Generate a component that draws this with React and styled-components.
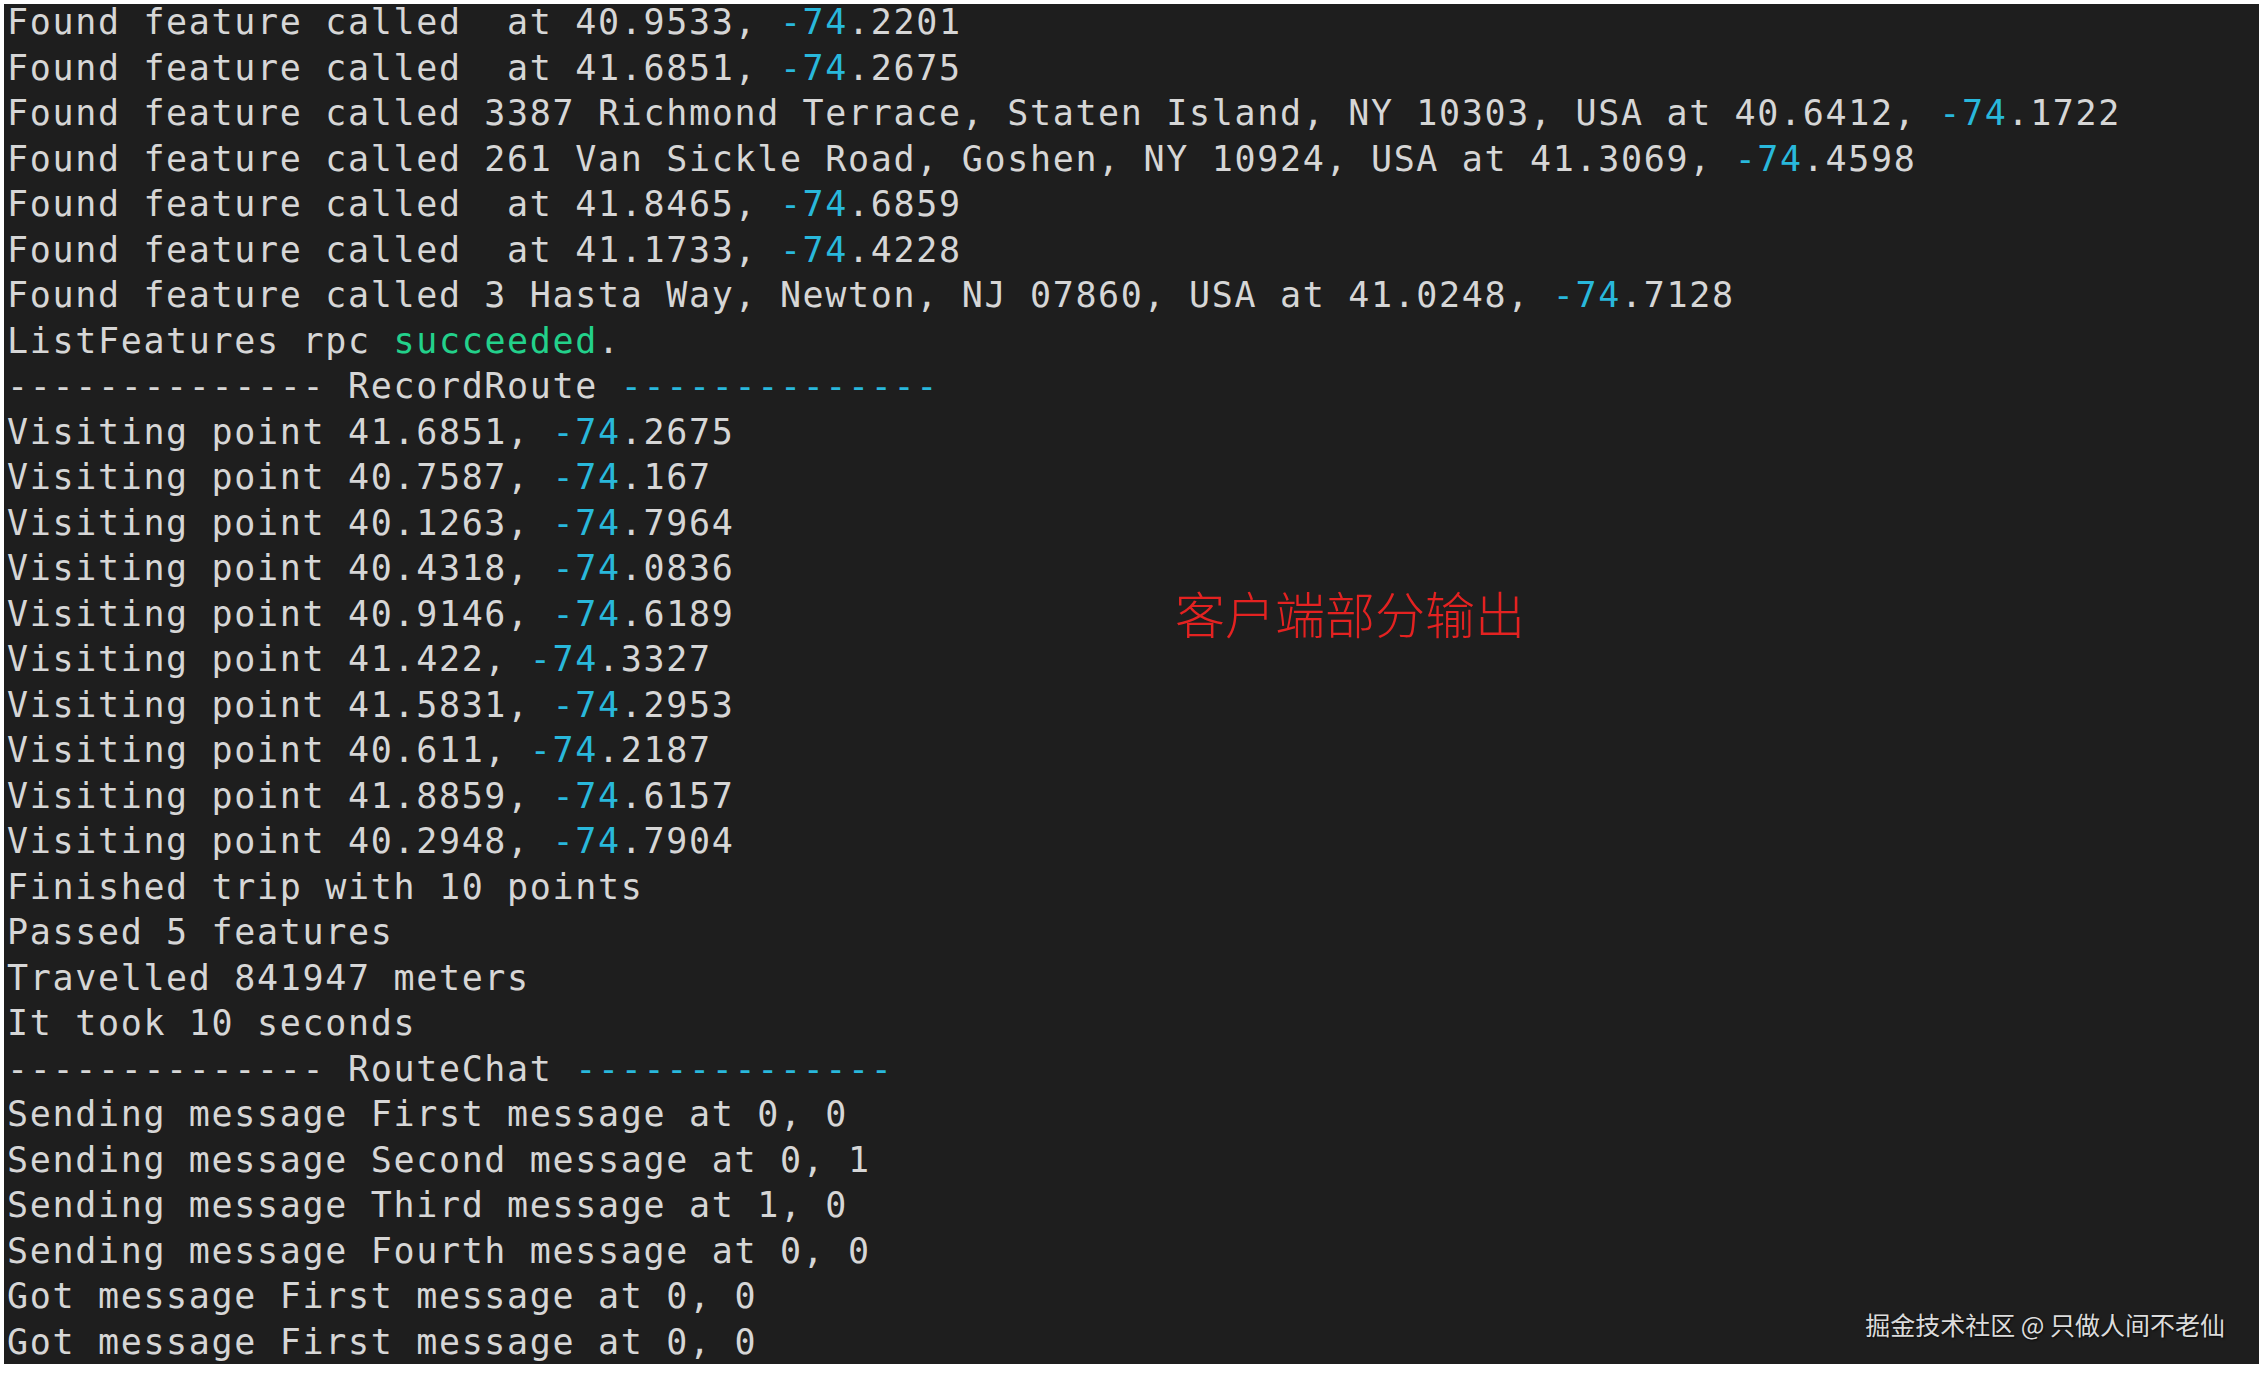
import React from "react";
import styled, { createGlobalStyle } from "styled-components";

const GlobalStyle = createGlobalStyle`
  html, body {
    margin: 0;
    padding: 0;
    background: #ffffff;
  }
`;

const Terminal = styled.div`
  position: relative;
  margin: 5px 0 0 4px;
  height: 1360px;
  background: #1e1e1e;
`;

const Output = styled.div`
  margin-top: -1px;
  padding-left: 3px;
  font-family: "DejaVu Sans Mono", "Liberation Mono", monospace;
  font-size: 35px;
  letter-spacing: 1.66px;
  line-height: 36px;
  color: #d6d6d6;
`;

const Line = styled.div`
  white-space: pre;
  height: 36px;
  padding-bottom: 9.5px;
`;

const Tint = styled.span`
  color: ${(p) => (p.$tone === "green" ? "#23d18b" : "#29b8db")};
`;

const Note = styled.div`
  position: absolute;
  left: 1171px;
  top: 583px;
  font-family: "Noto Sans CJK SC", sans-serif;
  font-size: 50px;
  line-height: 1;
  font-weight: 300;
  color: #e42221;
`;

const Watermark = styled.div`
  position: absolute;
  right: 34px;
  bottom: 22px;
  font-family: "Noto Sans CJK SC", sans-serif;
  font-size: 25px;
  color: #dcdcdc;
  text-shadow: 1px 1px 2px rgba(0, 0, 0, 0.7);
`;

const rows = [
  "Found feature called  at 40.9533, -74.2201",
  "Found feature called  at 41.6851, -74.2675",
  "Found feature called 3387 Richmond Terrace, Staten Island, NY 10303, USA at 40.6412, -74.1722",
  "Found feature called 261 Van Sickle Road, Goshen, NY 10924, USA at 41.3069, -74.4598",
  "Found feature called  at 41.8465, -74.6859",
  "Found feature called  at 41.1733, -74.4228",
  "Found feature called 3 Hasta Way, Newton, NJ 07860, USA at 41.0248, -74.7128",
  "@ok",
  "@sep RecordRoute",
  "Visiting point 41.6851, -74.2675",
  "Visiting point 40.7587, -74.167",
  "Visiting point 40.1263, -74.7964",
  "Visiting point 40.4318, -74.0836",
  "Visiting point 40.9146, -74.6189",
  "Visiting point 41.422, -74.3327",
  "Visiting point 41.5831, -74.2953",
  "Visiting point 40.611, -74.2187",
  "Visiting point 41.8859, -74.6157",
  "Visiting point 40.2948, -74.7904",
  "Finished trip with 10 points",
  "Passed 5 features",
  "Travelled 841947 meters",
  "It took 10 seconds",
  "@sep RouteChat",
  "Sending message First message at 0, 0",
  "Sending message Second message at 0, 1",
  "Sending message Third message at 1, 0",
  "Sending message Fourth message at 0, 0",
  "Got message First message at 0, 0",
  "Got message First message at 0, 0",
];

const dashes = "--------------";

function renderRow(text) {
  if (text === "@ok") {
    return (
      <>
        ListFeatures rpc <Tint $tone="green">succeeded</Tint>.
      </>
    );
  }
  if (text.startsWith("@sep ")) {
    return (
      <>
        {dashes} {text.slice(5)} <Tint>{dashes}</Tint>
      </>
    );
  }
  const parts = text.split("-74");
  if (parts.length === 1) return text;
  return (
    <>
      {parts[0]}
      <Tint>-74</Tint>
      {parts[1]}
    </>
  );
}

export default function App() {
  return (
    <>
      <GlobalStyle />
      <Terminal>
        <Output>
          {rows.map((r, i) => (
            <Line key={i}>{renderRow(r)}</Line>
          ))}
        </Output>
        <Note>客户端部分输出</Note>
        <Watermark>掘金技术社区 @ 只做人间不老仙</Watermark>
      </Terminal>
    </>
  );
}
